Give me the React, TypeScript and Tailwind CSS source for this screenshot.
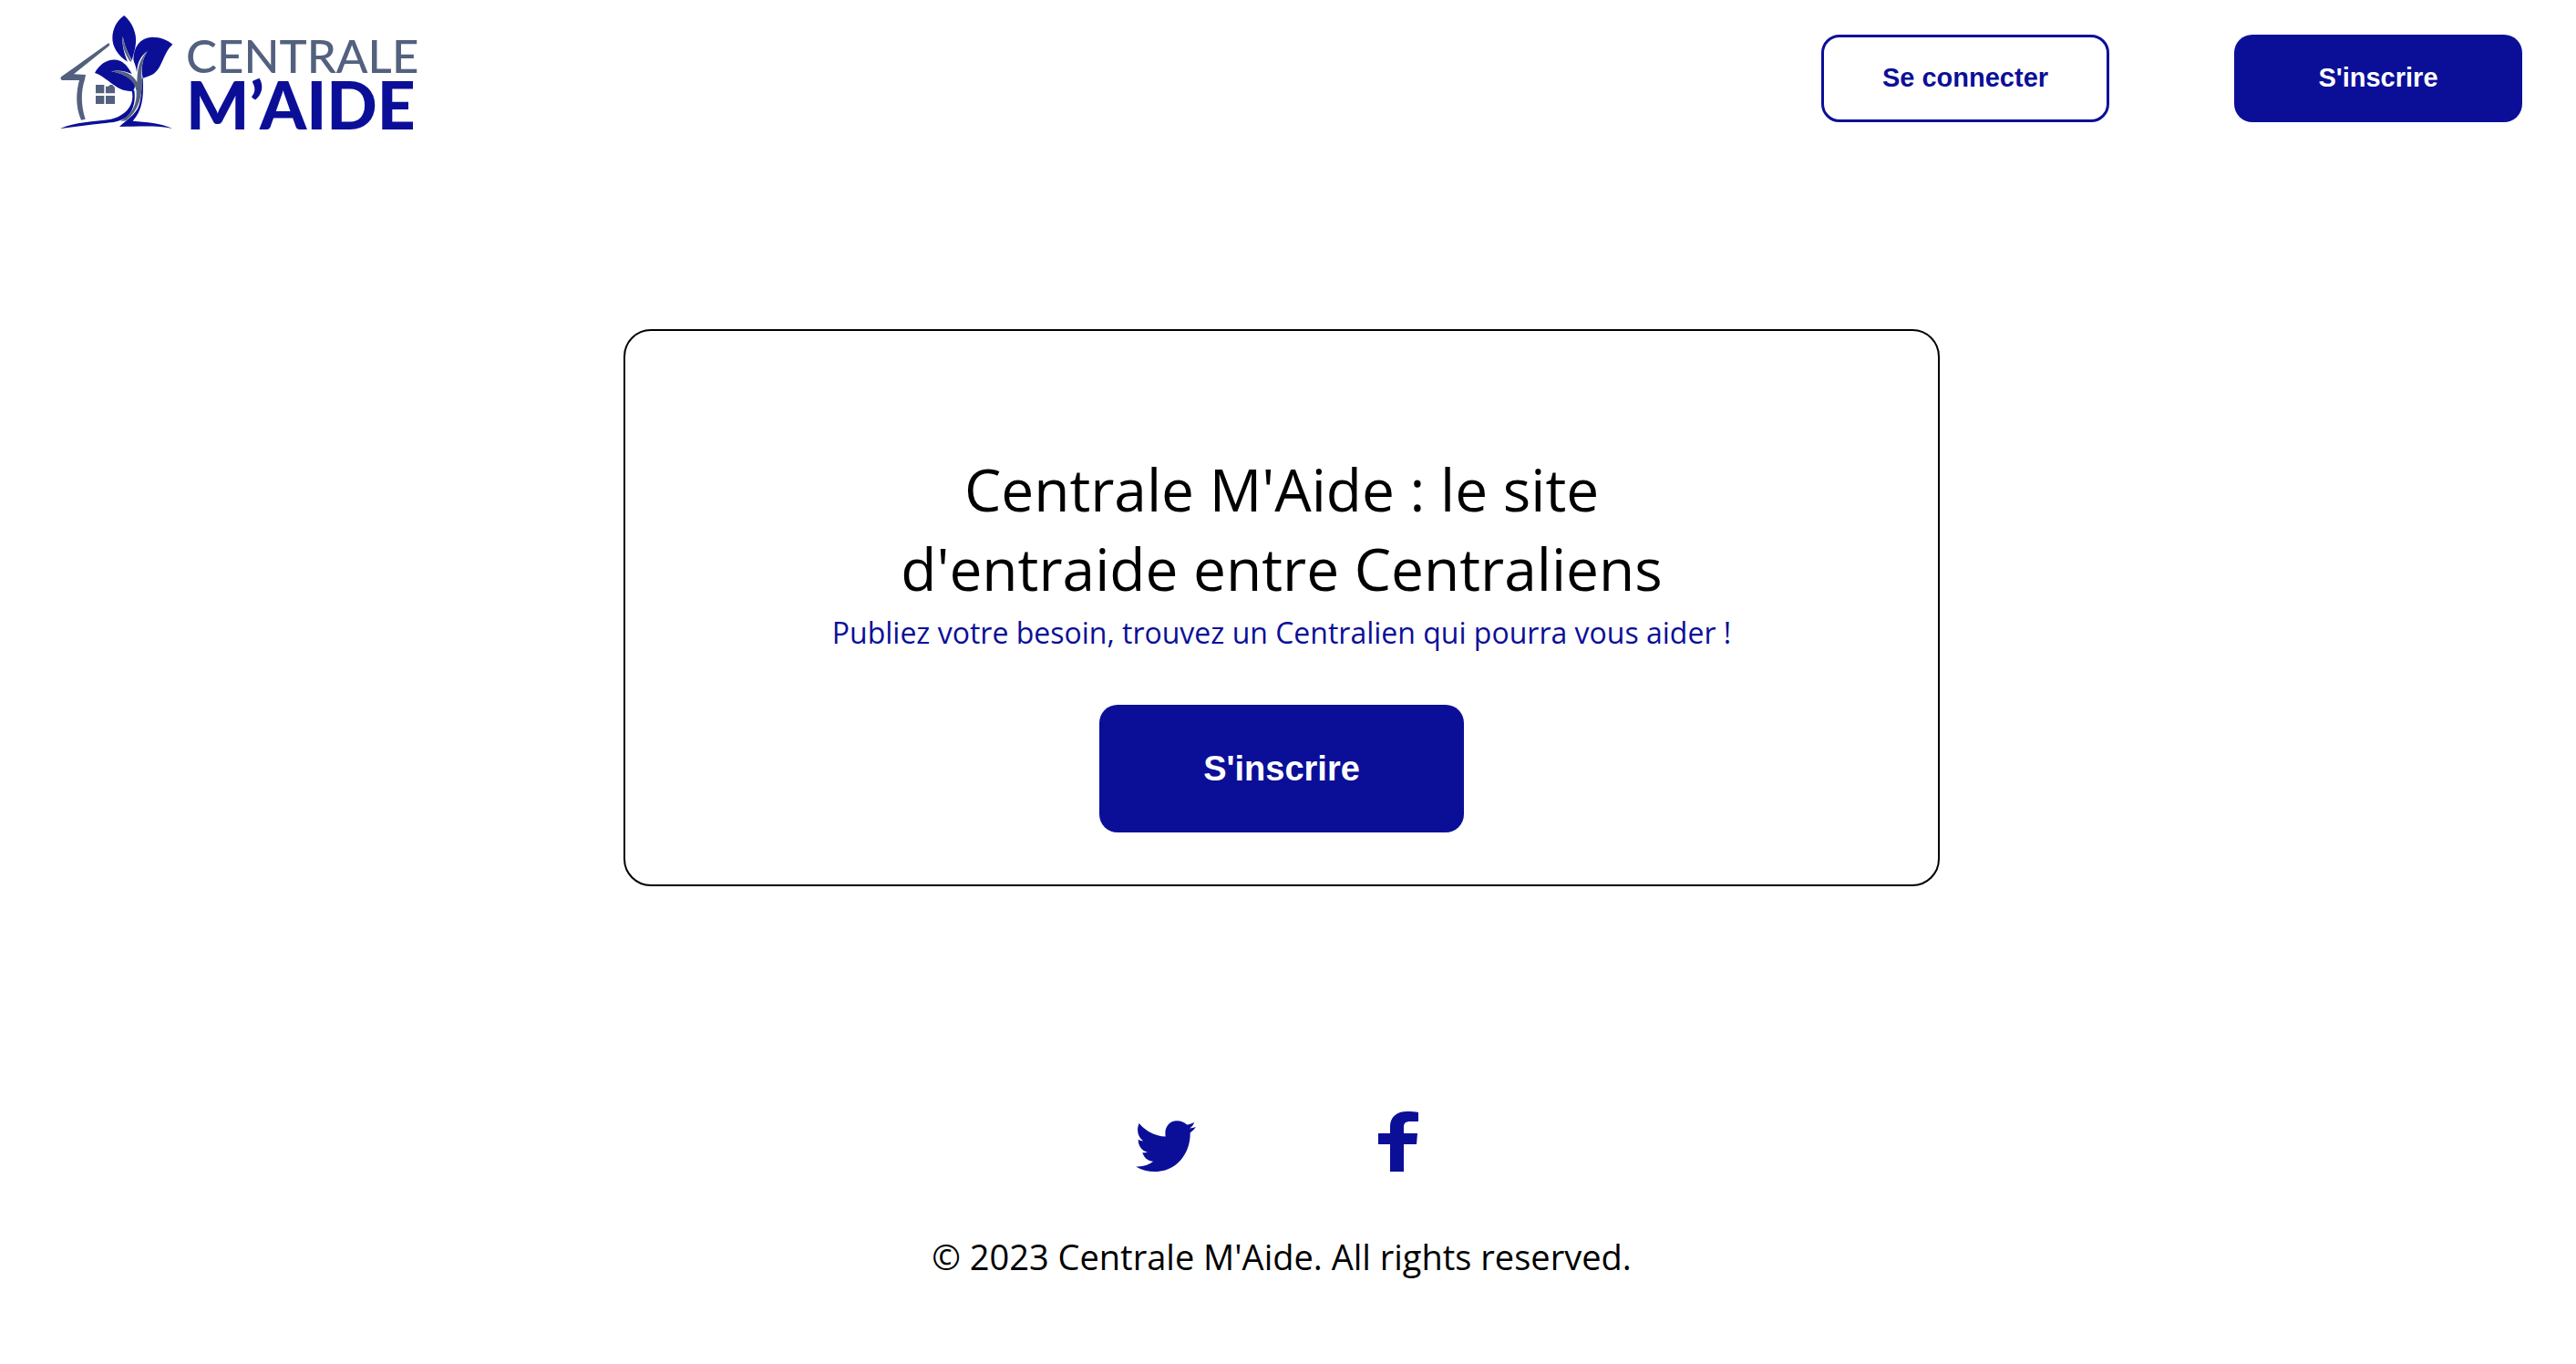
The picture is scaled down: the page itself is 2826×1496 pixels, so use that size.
function LogoMark() {
  return (
    <svg viewBox="48 42 378 390" className="w-[126px] h-[130px]" aria-hidden="true">
      <g fill="#53617f">
        <path d="M208 141 L211 149 L93 244 L132 246 L129 262 C115 305 117 350 131 392 L117 395 C98 352 100 305 111 264 L54 264 Q46 260 52 252 C105 215 158 176 208 141Z" />
        <path d="M165 279h28v28h-28zM165 315h28v27h-28zM198 315h30v27h-30zM198 284 H207 L212 279 H220 L228 288 V307 H198Z" />
      </g>
      <g fill="#0b0f98">
        <path d="M259 51 C284 72 301 110 297 142 C295 165 288 182 284 199 C276 182 262 160 254 120 C250 145 260 180 270 203 C236 182 220 152 220 125 C220 95 236 65 259 51Z" />
        <path d="M418 146 C385 175 383 235 345 248 Q334 253 320 257 C314 225 318 195 335 168 C312 185 303 205 300 238 C298 215 290 205 289 195 C290 155 310 125 350 122 C380 122 402 132 418 146Z" />
        <path d="M162 240 C180 205 215 188 245 200 C262 208 273 222 284 243 C264 235 240 228 216 235 C250 240 280 256 291 274 C296 285 294 290 287 301 C265 300 245 296 225 280 C200 262 185 248 162 240Z" />
        <path d="M50 422 C95 402 160 400 215 392 C262 382 295 345 284 300 L292 296 C298 340 285 375 258 391 C235 403 215 403 190 406 C145 410 95 418 50 423Z" />
        <path d="M320 256 C324 320 318 365 287 398 C330 402 378 404 418 423 C370 412 310 416 243 417 C265 395 298 378 308 345 C316 318 317 285 316 260Z" />
      </g>
      <g fill="#53617f">
        <path d="M216 235 C250 228 285 240 301 270 C302 240 303 200 335 168 C318 195 314 225 317 262 C319 320 305 365 265 397 L247 399 C285 375 301 345 299 300 C294 265 262 243 216 235Z" />
        <path d="M253 120 C260 150 270 175 283 201 L279 203 C262 180 251 150 253 120Z" />
      </g>
    </svg>
  );
}

function Logo() {
  return (
    <a href="#" aria-label="Centrale M'Aide" className="flex items-start">
      <LogoMark />
      <span className="ml-3 mt-6 flex flex-col font-['Lato',sans-serif]">
        <span className="text-[51px] leading-[46px] font-medium text-[#53617f]">CENTRALE</span>
        <span className="text-[73px] leading-[60px] font-black text-[#0b0f98]">M’AIDE</span>
      </span>
    </a>
  );
}

function TwitterIcon() {
  return (
    <svg viewBox="28 38 200 170" className="h-[56px] w-[66px]" fill="currentColor" aria-hidden="true">
      <path d="M39 47 C60 73 92 90 127 91 C122 62 138 39 165 39 C179 39 190 44 198 52 C207 50 216 47 223 43 C220 52 214 59 207 64 C214 63 221 61 228 59 C223 66 216 73 209 78 C211 145 165 208 92 208 C69 208 47 202 28 191 C49 193 70 187 86 174 C69 173 55 162 50 144 C56 145 62 145 67 143 C49 139 36 124 36 101 C41 104 47 106 53 106 C35 94 29 68 39 47Z" />
    </svg>
  );
}

function FacebookIcon() {
  return (
    <svg viewBox="0 0 44 66" className="h-[66px] w-[44px]" fill="currentColor" aria-hidden="true">
      <path d="M13 66V36H0V24H13V17C13 6 20 0 32 0C37 0 40 0 44 1V11H35C30 11 28 13 28 17V24H43L42 36H28V66Z" />
    </svg>
  );
}

export default function App() {
  return (
    <div className="flex min-h-screen flex-col bg-white pr-[14px] font-['Open_Sans',sans-serif] text-black">
      <header className="flex items-start justify-between pl-[66px] pr-[45px] pt-[14px]">
        <Logo />
        <nav className="mt-6 flex gap-[137px] font-['Liberation_Sans',sans-serif] text-[29px] font-bold">
          <button type="button" className="h-24 w-[316px] rounded-[20px] border-3 border-[#0b0f98] bg-white text-[#0b0f98]">
            Se connecter
          </button>
          <button type="button" className="h-24 w-[316px] rounded-[20px] bg-[#0b0f98] text-white">
            S'inscrire
          </button>
        </nav>
      </header>
      <main className="mt-[217px] flex justify-center">
        <section className="flex w-full max-w-[1444px] flex-col items-center rounded-[30px] border-2 border-black pt-[130px] pb-[57px] text-center">
          <h1 className="max-w-[960px] text-[64px] leading-[87px]">Centrale M'Aide : le site d'entraide entre Centraliens</h1>
          <p className="mt-1 text-[32px] leading-[46px] text-[#0b0f98]">
            Publiez votre besoin, trouvez un Centralien qui pourra vous aider !
          </p>
          <button type="button" className="mt-14 h-[140px] w-[400px] rounded-[20px] bg-[#0b0f98] font-['Liberation_Sans',sans-serif] text-[38px] font-bold text-white">
            S'inscrire
          </button>
        </section>
      </main>
      <footer className="mt-[247px] flex flex-col items-center">
        <div className="flex items-end gap-[189px] text-[#0b0f98]">
          <a href="#" aria-label="Twitter" className="flex w-[66px] justify-center">
            <TwitterIcon />
          </a>
          <a href="#" aria-label="Facebook" className="flex w-[66px] justify-center">
            <FacebookIcon />
          </a>
        </div>
        <p className="mt-[66px] text-[38px] leading-[54px] font-medium">© 2023 Centrale M'Aide. All rights reserved.</p>
      </footer>
    </div>
  );
}
